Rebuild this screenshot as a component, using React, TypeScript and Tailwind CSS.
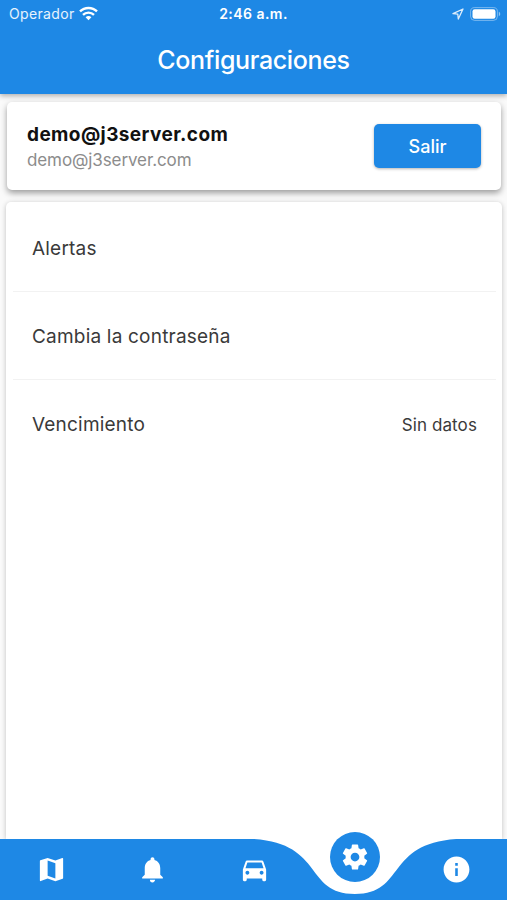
import { MdDirectionsCar, MdInfo, MdMap, MdNotifications } from 'react-icons/md'

type SettingRowProps = {
  label: string
  value?: string
}

function StatusBar() {
  return (
    <div className="grid h-7 grid-cols-3 items-center pr-1.5 pl-[9px] text-[14px] leading-none">
      <div className="flex items-center gap-[5px]">
        <span className="tracking-[0.35px] text-white/90">Operador</span>
        <svg viewBox="0 0 19 15" className="-mt-0.5 -ml-px h-[15px] w-[19px]" fill="none" stroke="white" strokeWidth="2.4">
          <path d="M1 5.4C5.7.8 13.3.8 18 5.4" />
          <path d="M4 8.8c3-2.9 8-2.9 11 0" />
          <path d="M6.6 11.2c1.7-1.5 4.1-1.5 5.8 0L9.5 14.2z" fill="white" stroke="none" />
        </svg>
      </div>
      <div className="-ml-[3px] text-center font-semibold tracking-[0.45px]">2:46 a.m.</div>
      <div className="flex items-center justify-end gap-[6px]">
        <svg viewBox="0 0 12 12" className="size-3" fill="none" stroke="white" strokeOpacity="0.85" strokeWidth="1.3" strokeLinejoin="round">
          <path d="M11 1 1 5.7l4.8.5.5 4.8z" />
        </svg>
        <svg viewBox="0 0 31 14" className="-mt-px h-[14px] w-[31px]">
          <rect x="0.6" y="0.6" width="26.8" height="12.8" rx="4" fill="none" stroke="white" strokeOpacity="0.4" />
          <rect x="2.5" y="2.3" width="23" height="9.4" rx="2.2" fill="white" />
          <path d="M28.8 4.8c1.9.7 1.9 3.7 0 4.4z" fill="white" fillOpacity="0.5" />
        </svg>
      </div>
    </div>
  )
}

function GearIcon() {
  return (
    <svg viewBox="0 0 24 24" className="size-[30px]" fill="currentColor">
      <path d="M19.43 12.98c.04-.32.07-.64.07-.98s-.03-.66-.07-.98l2.11-1.65c.19-.15.24-.42.12-.64l-2-3.46c-.12-.22-.39-.3-.61-.22l-2.49 1c-.52-.4-1.08-.73-1.69-.98l-.38-2.65C14.46 2.18 14.25 2 14 2h-4c-.25 0-.46.18-.49.42l-.38 2.65c-.61.25-1.17.59-1.69.98l-2.49-1c-.23-.09-.49 0-.61.22l-2 3.46c-.13.22-.07.49.12.64l2.11 1.65c-.04.32-.07.65-.07.98s.03.66.07.98l-2.11 1.65c-.19.15-.24.42-.12.64l2 3.46c.12.22.39.3.61.22l2.49-1c.52.4 1.08.73 1.69.98l.38 2.65c.03.24.24.42.49.42h4c.25 0 .46-.18.49-.42l.38-2.65c.61-.25 1.17-.59 1.69-.98l2.49 1c.23.09.49 0 .61-.22l2-3.46c.12-.22.07-.49-.12-.64l-2.11-1.65zM12 15.5c-1.93 0-3.5-1.57-3.5-3.5s1.57-3.5 3.5-3.5 3.5 1.57 3.5 3.5-1.57 3.5-3.5 3.5z" />
    </svg>
  )
}

function SettingRow({ label, value }: SettingRowProps) {
  return (
    <div className="flex h-[88px] items-center justify-between px-[19px] pt-[3px] text-[#3a3a3a]">
      <span className="text-[19px] tracking-[0.2px]">{label}</span>
      {value ? <span className="text-[17px] tracking-[0.1px]">{value}</span> : null}
    </div>
  )
}

function BottomNav() {
  return (
    <nav className="relative z-10 h-[61px] shrink-0">
      {/* bar with a dip under the selected item */}
      <svg viewBox="0 0 507 61" className="absolute inset-0 h-[61px] w-[507px]">
        <rect width="507" height="61" fill="white" />
        <path
          d="M0 0H253.5C324.5 4.6 304.2 55 354.9 55S385.3 4.6 456.3 0H507V61H0z"
          fill="#1e88e5"
        />
      </svg>
      <div className="relative grid h-full grid-cols-5 place-items-center pl-px text-white">
        <MdMap className="size-[31px]" />
        <MdNotifications className="size-[31px]" />
        <MdDirectionsCar className="ml-px size-[31px]" />
        <div className="relative -top-[13px] flex size-[50px] items-center justify-center rounded-full bg-[#1e88e5]">
          <GearIcon />
        </div>
        <MdInfo className="size-[31px]" />
      </div>
    </nav>
  )
}

export default function App() {
  return (
    <div className="flex h-[900px] w-[507px] flex-col overflow-hidden bg-[#fafafa] font-['Inter','Liberation_Sans',sans-serif]">
      <header className="relative z-10 h-[94px] shrink-0 bg-[#1e88e5] text-white shadow-[0_2px_5px_rgba(0,0,0,0.3)]">
        <StatusBar />
        <h1 className="flex h-[66px] items-center justify-center text-[25px] font-medium tracking-[-0.35px]">
          Configuraciones
        </h1>
      </header>

      <section className="relative mt-2 mr-[6px] ml-[7px] flex h-[88px] shrink-0 items-center justify-between rounded-[5px] bg-white px-5 shadow-[0_3px_6px_rgba(0,0,0,0.38)]">
        <div className="pt-0.5">
          <p className="text-[19px] leading-[26px] font-bold tracking-[0.4px] text-[#111]">demo@j3server.com</p>
          <p className="text-[17px] leading-[24px] tracking-[-0.1px] text-[#8c8c8c]">demo@j3server.com</p>
        </div>
        <button
          type="button"
          className="h-11 w-[107px] rounded-[5px] bg-[#1e88e5] text-[18px] font-medium text-white shadow-[0_1px_3px_rgba(0,0,0,0.3)]"
        >
          Salir
        </button>
      </section>

      <section className="mt-3 mr-[5px] ml-[6px] min-h-0 flex-1 rounded-t-[5px] bg-white pt-[2px] pr-[6px] pl-[7px] shadow-[0_1px_5px_rgba(0,0,0,0.24)]">
        <div className="divide-y divide-[#f2f2f2]">
          <SettingRow label="Alertas" />
          <SettingRow label="Cambia la contraseña" />
          <SettingRow label="Vencimiento" value="Sin datos" />
        </div>
      </section>

      <BottomNav />
    </div>
  )
}
